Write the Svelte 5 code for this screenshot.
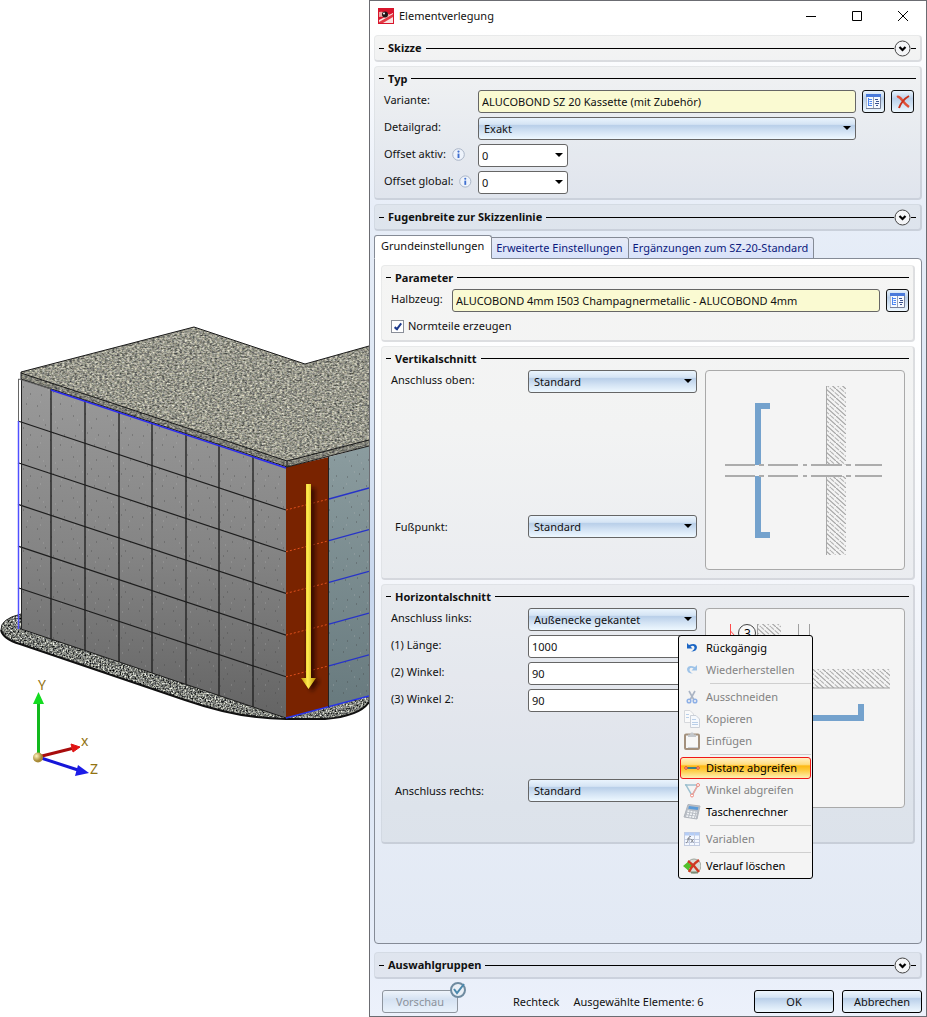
<script lang="ts">
  type MenuItem = { icon: string; label: string; disabled?: boolean; active?: boolean };

  const tabs = ["Grundeinstellungen", "Erweiterte Einstellungen", "Ergänzungen zum SZ-20-Standard"];
  let selectedTab = $state(tabs[0]);

  const menuGroups: MenuItem[][] = [
    [
      { icon: "undo", label: "Rückgängig" },
      { icon: "redo", label: "Wiederherstellen", disabled: true },
    ],
    [
      { icon: "cut", label: "Ausschneiden", disabled: true },
      { icon: "copy", label: "Kopieren", disabled: true },
      { icon: "paste", label: "Einfügen", disabled: true },
    ],
    [
      { icon: "distance", label: "Distanz abgreifen", active: true },
      { icon: "angle", label: "Winkel abgreifen", disabled: true },
      { icon: "calculator", label: "Taschenrechner" },
    ],
    [{ icon: "variables", label: "Variablen", disabled: true }],
    [{ icon: "clear", label: "Verlauf löschen" }],
  ];

  const angles = [
    { id: "winkel", label: "(2) Winkel:", value: "90" },
    { id: "winkel2", label: "(3) Winkel 2:", value: "90" },
  ];

  // facade grid
  const columns = [51, 85, 119, 152, 186, 219, 253];
  const rows = [0, 1, 2, 3, 4];
  const wallTop = (x: number) => 378 + (x - 21) * 0.336;
  const breakDashes = [[20, 50], [54, 59], [63, 93], [98, 102], [106, 137], [141, 146], [150, 177]];
</script>

{#snippet heading(title: string, expandable: boolean)}
  <div class="heading">
    <h2>{title}</h2>
    {#if expandable}
      <button class="expander" aria-label="{title} aufklappen">
        <svg viewBox="0 0 17 17" width="17" height="17">
          <circle cx="8.5" cy="8.5" r="7.5" fill="#f4f5f7" stroke="#444" />
          <path d="M5.500 7 8.500 10 11.500 7" fill="none" stroke="#000" stroke-width="2.2" />
        </svg>
      </button>
      <span class="stub"></span>
    {/if}
  </div>
{/snippet}

{#snippet info()}
  <svg class="info" viewBox="0 0 13 13" width="13" height="13">
    <circle cx="6.5" cy="6.5" r="5.8" fill="#eef3fb" stroke="#a9b4c6" />
    <circle cx="6.5" cy="3.6" r="1.1" fill="#3f6fd0" />
    <path d="M6.5 5.6V10" stroke="#3f6fd0" stroke-width="1.9" />
  </svg>
{/snippet}

{#snippet catalogIcon()}
  <svg viewBox="0 0 17 17" width="17" height="17">
    <rect x="1" y="1" width="15" height="15" fill="#f5f9ff" />
    <rect x="1" y="1" width="15" height="3" fill="#4a7ada" />
    <path d="M1.5 4V15.5" stroke="#b4bccb" />
    <path d="M1 15.5H15.500V4" fill="none" stroke="#76809a" />
    <path d="M8.5 4V15" stroke="#98a2b5" />
    <path d="M3.5 5V13M3.5 6.5H7M4.5 8.5H7M4.5 10.5H7M3.5 12.5H7" stroke="#4d86f0" fill="none" />
    <path d="M10 6.5H13M11 8.5H14M10 10.5H14M11 12.5H13" stroke="#3c5490" fill="none" />
  </svg>
{/snippet}

{#snippet menuIcon(name: string)}
  <svg viewBox="0 0 18 18" width="18" height="18">
    {#if name === "undo"}
      <path d="M4 4V9.500H9.500L7.500 7.500Q11 5.500 11.500 8.500Q11.500 11 8 12.500Q14 12.500 14 8Q13 3.500 6 6Z" fill="#1c66c4" />
    {:else if name === "redo"}
      <path d="M14 4V9.500H8.500L10.500 7.500Q7 5.500 6.500 8.500Q6.500 11 10 12.500Q4 12.500 4 8Q5 3.500 12 6Z" fill="#9ec3e8" />
    {:else if name === "cut"}
      <path d="M6 3 11 12M12 3 7 12" stroke="#aab4c4" stroke-width="1.6" />
      <circle cx="6" cy="13" r="1.8" fill="none" stroke="#8eb0e6" stroke-width="1.5" />
      <circle cx="12" cy="13" r="1.8" fill="none" stroke="#8eb0e6" stroke-width="1.5" />
    {:else if name === "copy"}
      <path d="M1.500 0.500H7L10.500 4V12.500H1.500Z" fill="#fafafa" stroke="#d6d8dc" />
      <path d="M7.500 5.500H13L16.500 9V17.500H7.500Z" fill="#f6f9fd" stroke="#cbd0d8" />
      <path d="M3 4.500H6M3 7.500H6M9 9.500H13M9 12.500H15M9 14.500H15" stroke="#b9cfe9" />
    {:else if name === "paste"}
      <rect x="2" y="2.500" width="14" height="14.500" rx="1" fill="#f7f7f7" stroke="#a3907c" stroke-width="2" />
      <path d="M5 5V2.500H7L8 0.500H10L11 2.500H13V5Z" fill="#c4c8cd" />
      <path d="M5 15.500H15" stroke="#ccd0d6" />
    {:else if name === "distance"}
      <path d="M3 9H15" stroke="#3f7f86" stroke-width="2" />
      <circle cx="3" cy="9" r="1.3" fill="#ffd0b0" stroke="#e0452c" />
      <circle cx="15" cy="9" r="1.3" fill="#ffd0b0" stroke="#e0452c" />
    {:else if name === "angle"}
      <path d="M3 4H15L9 14.500Z" fill="none" stroke="#9dc0cf" stroke-width="1.5" />
      <path d="M9 14.500 15 4" stroke="#f0a49c" stroke-width="1.5" />
      <circle cx="9" cy="14.500" r="1.5" fill="#fff" stroke="#ee8a80" />
      <circle cx="15" cy="4" r="1.5" fill="#fff" stroke="#ee8a80" />
      <circle cx="3" cy="4" r="1" fill="#9dc0cf" />
    {:else if name === "calculator"}
      <path d="M5 1.500 17 3 14 16 1 14Z" fill="#b9bec5" stroke="#b0b5bc" />
      <path d="M6 3 15.500 4.200 14.800 7 5.200 5.800Z" fill="#5b9bd8" />
      <path d="M4.500 8 14 9.500M4 10.500 13.500 12M3.300 13 13 14.400" stroke="#f4f6f8" stroke-width="1.6" stroke-dasharray="2 1" />
    {:else if name === "variables"}
      <rect x="1.500" y="2.500" width="15" height="13" fill="#f4f8ff" stroke="#c3cce0" />
      <path d="M2 4H16" stroke="#b4cdf6" stroke-width="3" />
      <path d="M6.500 3V15M11.500 3V15M2 9.500H16M2 12.500H16" stroke="#c6cfe4" />
      <path d="M3 13Q5 13 5.500 8Q6 6 8 6.500M4 9H7.500M8 9 10.500 12.500M10.500 9 8 12.500" fill="none" stroke="#85898f" />
    {:else if name === "clear"}
      <circle cx="11" cy="9" r="7" fill="#d9ddd6" stroke="#9da39b" />
      <path d="M0 9 6 4V7H9V11H6V14Z" fill="#54c02c" />
      <path d="M8 15.500H15" stroke="#7a8a72" stroke-width="2" />
      <path d="M5 4Q11 8 16 15M16 3Q9 8 6 15" fill="none" stroke="#d03a22" stroke-width="2.4" />
    {/if}
  </svg>
{/snippet}

<main>
  <div class="viewport">
    <svg viewBox="0 0 369 1017" role="img" aria-label="Gebäudemodell">
      <defs>
        <linearGradient id="wall" x1="0" y1="0" x2="0" y2="1">
          <stop offset="0" stop-color="#9a9a9a" />
          <stop offset="0.5" stop-color="#858585" />
          <stop offset="1" stop-color="#646464" />
        </linearGradient>
        <linearGradient id="side" x1="0" y1="0" x2="0" y2="1">
          <stop offset="0" stop-color="#8b9c9f" />
          <stop offset="1" stop-color="#687a7e" />
        </linearGradient>
        <linearGradient id="shaft">
          <stop offset="0" stop-color="#c39a00" />
          <stop offset="0.45" stop-color="#ffec50" />
          <stop offset="1" stop-color="#b88d00" />
        </linearGradient>
        <radialGradient id="ball" cx="0.35" cy="0.35">
          <stop offset="0" stop-color="#fff3c0" />
          <stop offset="1" stop-color="#a88a35" />
        </radialGradient>
        <filter id="gravel" x="0" y="0" width="1" height="1" color-interpolation-filters="sRGB">
          <feTurbulence type="fractalNoise" baseFrequency="0.4 0.6" numOctaves="2" seed="4" />
          <feColorMatrix values="0.9 0.3 0 0 -0.01  0.85 0.35 0 0 -0.01  0.75 0.3 0.1 0 -0.03  0 0 0 0 1" />
          <feComposite in2="SourceAlpha" operator="in" />
        </filter>
        <filter id="ground" x="0" y="0" width="1" height="1" color-interpolation-filters="sRGB">
          <feTurbulence type="fractalNoise" baseFrequency="0.6" numOctaves="2" seed="9" />
          <feColorMatrix values="1.6 0.3 0 0 -0.46  1.6 0.3 0 0 -0.45  1.5 0.3 0.1 0 -0.47  0 0 0 0 1" />
          <feComposite in2="SourceAlpha" operator="in" />
        </filter>
        <filter id="soft"><feGaussianBlur stdDeviation="2" /></filter>
        <pattern id="speckle" width="34" height="41" patternUnits="userSpaceOnUse">
          <path d="M5 6h1M17 4h1M28 9h1M11 15h1M23 18h1M30 25h1M7 26h1M16 30h1M26 35h1M3 37h1M19 23h1" stroke="#3c3c3c" stroke-opacity="0.6" />
          <path d="M9 10h1M21 12h1M14 21h1M27 29h1M6 33h1M20 38h1" stroke="#bbb" stroke-opacity="0.5" />
        </pattern>
      </defs>

      <path d="M21 614Q0 619 1 630Q3 639 20 644L185 700Q240 719 286 719H325Q360 716 369 702V690L286 712 21 625Z" filter="url(#ground)" />
      <path d="M21 614Q0 619 1 630" fill="none" stroke="#222" />
      <path d="M1 630Q3 639 20 644L185 700Q240 719 286 719H325Q360 716 369 702" fill="none" stroke="#111" stroke-width="2" />

      <path d="M21 378 286 467V718L21 629Z" fill="url(#wall)" />
      <path d="M21 378 286 467V718L21 629Z" fill="url(#speckle)" />
      <path d="M329 457 369 446V696L329 707Z" fill="url(#side)" />
      <path d="M329 457 369 446V696L329 707Z" fill="url(#speckle)" />
      <path d="M286 467 329 457V707L286 718Z" fill="#792300" />

      {#each columns as x}
        <path d="M{x} {wallTop(x)}V{wallTop(x) + 251}" stroke="#1d1d1d" stroke-width="1.3" />
      {/each}
      {#each rows as row}
        <path d="M18 {421 + row * 41.7} 286 {510 + row * 41.7}" stroke="#1d1d1d" stroke-width="1.2" />
        <path d="M286 {510 + row * 41.7} 329 {499 + row * 41.7}" stroke="#e0501c" stroke-dasharray="2 2" />
        <path d="M329 {499 + row * 41.7} 369 {488 + row * 41.7}" stroke="#2733c8" stroke-width="1.3" />
      {/each}
      <path d="M21 629 286 718" stroke="#1d1d1d" />
      <path d="M286 718 369 696" stroke="#2733e8" stroke-width="1.3" />
      <path d="M21.5 372V629M328.5 457V707" stroke="#222" />

      <path d="M21 372 194 327 305 364 369 346V446L287 467 21 379Z" filter="url(#gravel)" />
      <path d="M21 373 287 461 369 440V446L287 467 21 379Z" fill="#333" fill-opacity="0.2" />
      <path d="M21 379V372L194 327 305 364 369 346M21 373 287 461 369 440M21 379 287 467 369 446M287 461V467" fill="none" stroke="#1a1a1a" />
      <path d="M18.5 421V379L51 389" fill="none" stroke="#666" />
      <path d="M18.5 421V629" stroke="#5050ff" stroke-width="1.5" />
      <path d="M51 390 286 468" stroke="#2a2af0" stroke-width="1.5" />

      <path d="M310 488H315V680H320L312 692 306 681Z" fill="#200800" fill-opacity="0.7" filter="url(#soft)" />
      <path d="M306 484H311V678H316L308.5 689 301 678H306Z" fill="url(#shaft)" />

      <path d="M38.5 757V702" stroke="#12b81c" stroke-width="3" />
      <path d="M38.5 692 44 704H33Z" fill="#14dc20" />
      <path d="M38 757 72 748.500" stroke="#a80c0c" stroke-width="3" />
      <path d="M71 744 80 747 73 752Z" fill="#e01414" stroke="#e01414" />
      <path d="M38 757 78 770" stroke="#1616d8" stroke-width="3" />
      <path d="M78 765 89 773 75 776Z" fill="#1c1ce8" />
      <circle cx="38" cy="757.5" r="5" fill="url(#ball)" />
      <g fill="#927312" font-size="14">
        <text x="38" y="690">Y</text>
        <text x="81" y="746">x</text>
        <text x="90" y="774">Z</text>
      </g>
    </svg>
  </div>

  <div class="dialog" role="dialog" aria-label="Elementverlegung">
    <header class="titlebar">
      <svg viewBox="0 0 16 16" width="16" height="16">
        <rect width="16" height="16" fill="#d8152c" />
        <path d="M1 12 15 5V15H1Z" fill="#f9e4e2" />
        <path d="M1 14 15 6V9L5 15H1Z" fill="#e23a44" />
        <path d="M1 4Q7 3 12 7L8 10Q3 8 1 9Z" fill="#eaa9a4" />
        <circle cx="7" cy="6.500" r="3" fill="#1e1618" />
        <circle cx="6" cy="5.500" r="1" fill="#fff" />
      </svg>
      <h1>Elementverlegung</h1>
      <button aria-label="Minimieren"><svg viewBox="0 0 10 10" width="10" height="10"><path d="M0 5.500H10" stroke="#000" /></svg></button>
      <button aria-label="Maximieren"><svg viewBox="0 0 10 10" width="10" height="10"><path d="M.5.5H9.500V9.500H.5Z" fill="none" stroke="#000" /></svg></button>
      <button aria-label="Schließen"><svg viewBox="0 0 10 10" width="10" height="10"><path d="M0 0 10 10M10 0 0 10" stroke="#000" /></svg></button>
    </header>

    <section class="group collapsed">{@render heading("Skizze", true)}</section>

    <section class="group">
      {@render heading("Typ", false)}
      <div class="form">
        <div class="row">
          <label for="variante">Variante:</label>
          <input id="variante" class="material" value="ALUCOBOND SZ 20 Kassette (mit Zubehör)" readonly />
          <button class="tool" aria-label="Variante auswählen">{@render catalogIcon()}</button>
          <button class="tool" aria-label="Variante entfernen">
            <svg viewBox="0 0 17 17" width="17" height="17">
              <path d="M3 4Q5 3 8 7Q11 11 15 14" fill="none" stroke="#e05038" stroke-width="2.4" />
              <path d="M15 3Q8 7 5 15" fill="none" stroke="#c9301a" stroke-width="2" />
            </svg>
          </button>
        </div>
        <div class="row">
          <label for="detailgrad">Detailgrad:</label>
          <div class="select"><select id="detailgrad"><option>Exakt</option></select></div>
        </div>
        <div class="row">
          <label for="offset-aktiv">Offset aktiv: {@render info()}</label>
          <div class="select plain"><select id="offset-aktiv"><option>0</option></select></div>
        </div>
        <div class="row">
          <label for="offset-global">Offset global: {@render info()}</label>
          <div class="select plain"><select id="offset-global"><option>0</option></select></div>
        </div>
      </div>
    </section>

    <section class="group collapsed">{@render heading("Fugenbreite zur Skizzenlinie", true)}</section>

    <div class="tabs" role="tablist">
      {#each tabs as tab}
        <button role="tab" class:selected={tab === selectedTab} aria-selected={tab === selectedTab} onclick={() => (selectedTab = tab)}>{tab}</button>
      {/each}
    </div>

    <div class="panel" role="tabpanel">
      <section class="group">
        {@render heading("Parameter", false)}
        <div class="form parameter">
          <div class="row">
            <label for="halbzeug">Halbzeug:</label>
            <input id="halbzeug" class="material" value="ALUCOBOND 4mm I503 Champagnermetallic - ALUCOBOND 4mm" readonly />
            <button class="tool" aria-label="Halbzeug auswählen">{@render catalogIcon()}</button>
          </div>
          <label class="check"><input type="checkbox" checked />Normteile erzeugen</label>
        </div>
      </section>

      <section class="group">
        {@render heading("Vertikalschnitt", false)}
        <div class="cut">
          <div class="fields vertical">
            <div class="field">
              <label for="oben">Anschluss oben:</label>
              <div class="select"><select id="oben"><option>Standard</option></select></div>
            </div>
            <div class="field last">
              <label for="fusspunkt">Fußpunkt:</label>
              <div class="select"><select id="fusspunkt"><option>Standard</option></select></div>
            </div>
          </div>
          <svg class="preview" viewBox="0 0 198 198" role="img" aria-label="Vertikalschnitt">
            <defs>
              <pattern id="hatch" width="10" height="9" patternUnits="userSpaceOnUse">
                <path d="M0 0 10 9" stroke="#a4a4a4" stroke-width="1.2" />
                <path d="M5 0 10 4.500M0 4.500 5 9" stroke="#b4b4b4" stroke-width="1.2" stroke-dasharray="4 1" />
              </pattern>
            </defs>
            <path d="M120 15H140V94H120ZM120 105H140V184H120Z" fill="url(#hatch)" />
            <path d="M120.5 15V94M120.5 105V184" stroke="#a8a8a8" />
            <path d="M64 35H52V94M52 105V164H64" fill="none" stroke="#74a2cd" stroke-width="6" />
            {#each breakDashes as [from, to]}
              <path d="M{from - 1} 94H{to - 1}M{from - 1} 105H{to - 1}" stroke="#acacac" stroke-width="2" />
            {/each}
          </svg>
        </div>
      </section>

      <section class="group horizontal">
        {@render heading("Horizontalschnitt", false)}
        <div class="cut">
          <div class="fields">
            <div class="field">
              <label for="links">Anschluss links:</label>
              <div class="select"><select id="links"><option>Außenecke gekantet</option></select></div>
            </div>
            <div class="field">
              <label for="laenge">(1) Länge:</label>
              <div class="anchor">
                <input id="laenge" value="1000" />
                <div class="menu" role="menu">
                  {#each menuGroups as group, i}
                    {#if i > 0}<hr />{/if}
                    {#each group as item}
                      <button role="menuitem" class:active={item.active} disabled={item.disabled}>
                        {@render menuIcon(item.icon)}{item.label}
                      </button>
                    {/each}
                  {/each}
                </div>
              </div>
            </div>
            {#each angles as angle}
              <div class="field">
                <label for={angle.id}>{angle.label}</label>
                <input id={angle.id} value={angle.value} />
              </div>
            {/each}
            <div class="field last">
              <label for="rechts">Anschluss rechts:</label>
              <div class="select"><select id="rechts"><option>Standard</option></select></div>
            </div>
          </div>
          <svg class="preview" viewBox="0 0 198 198" role="img" aria-label="Horizontalschnitt">
            <path d="M51 15H75V60H184V79H51Z" fill="url(#hatch)" />
            <path d="M51.5 15V79H184M92.5 15V60M103.5 15V60" fill="none" stroke="#a0a0a0" />
            <path d="M24.5 15V45M24.500 22 29 27" fill="none" stroke="#ff4a4a" />
            <circle cx="41" cy="24" r="8.5" fill="#f8f8f8" stroke="#444" />
            <text x="38" y="29" font-size="12">3</text>
            <path d="M60 109H155V95" fill="none" stroke="#74a2cd" stroke-width="6" />
          </svg>
        </div>
      </section>
    </div>

    <section class="group collapsed">{@render heading("Auswahlgruppen", true)}</section>

    <footer>
      <div class="vorschau">
        <button class="command" disabled>Vorschau</button>
        <svg viewBox="0 0 18 18" width="18" height="18">
          <circle cx="9" cy="9" r="7" fill="#e9eff6" stroke="#6f8ba0" stroke-width="2" />
          <path d="M5 8 8 12 15 3" fill="none" stroke="#4a88ac" stroke-width="2" />
        </svg>
      </div>
      <span class="shape">Rechteck</span>
      <span>Ausgewählte Elemente: 6</span>
      <button class="command ok">OK</button>
      <button class="command">Abbrechen</button>
    </footer>
  </div>
</main>

<style>
  :global(body) {
    background: #fff;
  }

  main {
    display: grid;
    grid-template-columns: 369px minmax(0, 1fr);
    min-height: 100vh;
    font: 11px/16px "Noto Sans", "Open Sans", sans-serif;
    color: #111;
  }

  .viewport svg {
    display: block;
    width: 100%;
  }

  .dialog {
    display: flex;
    flex-direction: column;
    box-sizing: border-box;
    padding: 0 4px 3px;
    border: 1px solid #6b6c72;
    background: linear-gradient(#fff 0, #fff 3%, #e8eef8 20%, #dde7f4 40%, #c8d7ee 58%, #dfe8f6 80%, #ecf1fb 100%);
  }

  button,
  input,
  select {
    box-sizing: border-box;
    margin: 0;
    font: inherit;
    color: inherit;
  }

  button svg {
    display: block;
  }

  /* Title bar */
  .titlebar {
    display: flex;
    align-items: center;
    height: 30px;
    margin: 0 -4px 4px 4px;
  }

  .titlebar h1 {
    flex: 1;
    margin: 0 0 0 5px;
    font-size: 11px;
    font-weight: normal;
  }

  .titlebar button {
    display: flex;
    align-items: center;
    justify-content: center;
    width: 46px;
    height: 30px;
    padding: 0;
    border: none;
    background: none;
  }

  /* Groups */
  .group {
    box-sizing: border-box;
    padding: 0 4px 4px;
    margin-bottom: 4px;
    border: 1px solid rgba(60, 70, 90, 0.06);
    border-right: 2px solid rgba(60, 70, 90, 0.12);
    border-bottom: 2px solid rgba(60, 70, 90, 0.12);
    border-radius: 4px;
    background: rgba(90, 90, 60, 0.06);
  }

  .group.collapsed {
    padding-bottom: 0;
  }

  .heading {
    display: flex;
    align-items: center;
    height: 23px;
  }

  .collapsed .heading {
    height: 24px;
  }

  h2 {
    flex: 1;
    display: flex;
    align-items: center;
    gap: 4px;
    margin: 0;
    font-size: 11px;
    font-weight: bold;
    white-space: nowrap;
  }

  h2::before,
  h2::after,
  .stub {
    content: "";
    width: 5px;
    height: 1px;
    background: #000;
  }

  h2::after {
    flex: 1;
  }

  .expander {
    padding: 0;
    border: none;
    background: none;
  }

  /* Forms */
  .form {
    display: grid;
    gap: 4px;
    padding: 0 2px 0 5px;
  }

  .row {
    display: grid;
    grid-template-columns: 88px minmax(0, 1fr) 23px 23px;
    column-gap: 6px;
  }

  label {
    display: flex;
    align-items: center;
    gap: 6px;
    height: 20px;
    white-space: nowrap;
  }

  input,
  select {
    width: 100%;
    height: 23px;
    padding: 0 3px;
    border: 1px solid #666;
    border-radius: 3px;
    background: #fff;
  }

  .material {
    background: #fafad2;
  }

  .select,
  .anchor {
    position: relative;
  }

  select {
    display: block;
    padding: 0 18px 0 5px;
    appearance: none;
    background: linear-gradient(#eaf4fd 0, #d5e4f4 30%, #b9cfe9 36%, #d3e3f4 65%, #eef8ff 100%);
  }

  .select::after {
    content: "";
    position: absolute;
    top: 9px;
    right: 5px;
    border: 4px solid transparent;
    border-top: 4px solid #000;
    border-bottom: none;
    pointer-events: none;
  }

  .plain {
    width: 90px;
  }

  .plain select {
    padding-left: 3px;
    background: #fff;
  }

  .tool {
    display: flex;
    align-items: center;
    justify-content: center;
    width: 23px;
    height: 23px;
    padding: 0;
    border: 1px solid #111;
    border-radius: 3px;
    background: linear-gradient(#eaf4fd 0, #b9cfe9 36%, #eef8ff 100%);
  }

  /* Tabs */
  .tabs {
    display: flex;
    align-items: flex-end;
    margin-bottom: -1px;
    z-index: 1;
  }

  .tabs button {
    height: 22px;
    padding: 0 5px 0 4px;
    border: 1px solid #858b96;
    border-left-width: 0;
    border-radius: 0 3px 0 0;
    background: linear-gradient(#e6eaf6, #d8e2fa);
    color: #0c1a7c;
    white-space: nowrap;
  }

  .tabs button.selected {
    height: 24px;
    padding: 0 7px 2px 6px;
    border-left-width: 1px;
    border-bottom-color: #fff;
    border-radius: 3px 3px 0 0;
    background: #fff;
    color: #111;
  }

  .panel {
    flex: 1;
    margin-bottom: 8px;
    padding: 6px;
    border: 1px solid #858b96;
    border-radius: 0 4px 4px 4px;
    background: linear-gradient(#fff 0, #fcfdfe 25%, #f4f6fb 48%, #e6ecf6 80%, #e2e9f4 100%);
  }

  .parameter {
    padding-right: 0;
  }

  .parameter .row {
    grid-template-columns: 55px minmax(0, 1fr) 23px;
  }

  .check {
    gap: 4px;
    height: 20px;
  }

  .check input {
    appearance: none;
    position: relative;
    width: 13px;
    height: 13px;
    padding: 0;
    border: 1px solid #8a8f99;
    border-radius: 0;
  }

  .check input:checked::after {
    content: "";
    position: absolute;
    left: 4px;
    top: 1px;
    width: 2px;
    height: 6px;
    border: solid #1c3a8c;
    border-width: 0 2px 2px 0;
    transform: rotate(38deg);
  }

  .cut {
    display: grid;
    grid-template-columns: minmax(0, 1fr) 200px;
    gap: 8px;
    padding: 0 4px 4px 5px;
  }

  .fields {
    display: flex;
    flex-direction: column;
    gap: 4px;
    padding-bottom: 6px;
  }

  .fields.vertical {
    padding-bottom: 32px;
  }

  .field {
    display: grid;
    grid-template-columns: 137px minmax(0, 1fr);
  }

  .field.last {
    margin-top: auto;
  }

  .field.last label {
    height: 23px;
    padding-left: 4px;
  }

  .preview {
    box-sizing: border-box;
    width: 200px;
    height: 200px;
    border: 1px solid #a9a9a9;
    border-radius: 4px;
    background: #f4f4f4;
  }

  .horizontal {
    margin-bottom: 0;
    padding-bottom: 30px;
  }

  /* Context menu */
  .menu {
    position: absolute;
    z-index: 2;
    top: 0;
    left: 150px;
    box-sizing: border-box;
    width: 135px;
    padding: 1px;
    border: 1px solid #000;
    border-radius: 3px;
    background: #f4f4f4;
  }

  .menu button {
    display: flex;
    align-items: center;
    gap: 5px;
    width: 100%;
    height: 22px;
    padding: 0 2px;
    border: 1px solid transparent;
    border-radius: 3px;
    background: none;
    color: #000;
    white-space: nowrap;
  }

  .menu button:disabled {
    color: #838383;
  }

  .menu button.active {
    border-color: #f01818;
    background: linear-gradient(#fff0c4 0, #ffdd80 32%, #fdb913 40%, #fdc93c 60%, #fff0b4 100%);
  }

  .menu hr {
    height: 1px;
    margin: 2px 0 2px 30px;
    border: none;
    background: #cfcfcf;
  }

  /* Footer */
  footer {
    display: flex;
    align-items: center;
    padding-top: 7px;
  }

  .vorschau {
    position: relative;
    margin-left: 8px;
  }

  .vorschau svg {
    position: absolute;
    top: -9px;
    right: -9px;
  }

  .command {
    width: 80px;
    height: 23px;
    padding: 0;
    border: 1px solid #000;
    border-radius: 3px;
    background: linear-gradient(#eef6fd 0, #d5e4f4 30%, #b9cfe9 36%, #d3e3f4 65%, #eef8ff 100%);
  }

  .vorschau .command {
    width: 76px;
    border-color: #8e959e;
    background: linear-gradient(#eef4fb, #d5e2f2 40%, #e9f2fb);
    color: #8b929b;
  }

  .shape {
    margin: 0 14px 0 55px;
  }

  .ok {
    margin: 0 8px 0 auto;
  }
</style>
